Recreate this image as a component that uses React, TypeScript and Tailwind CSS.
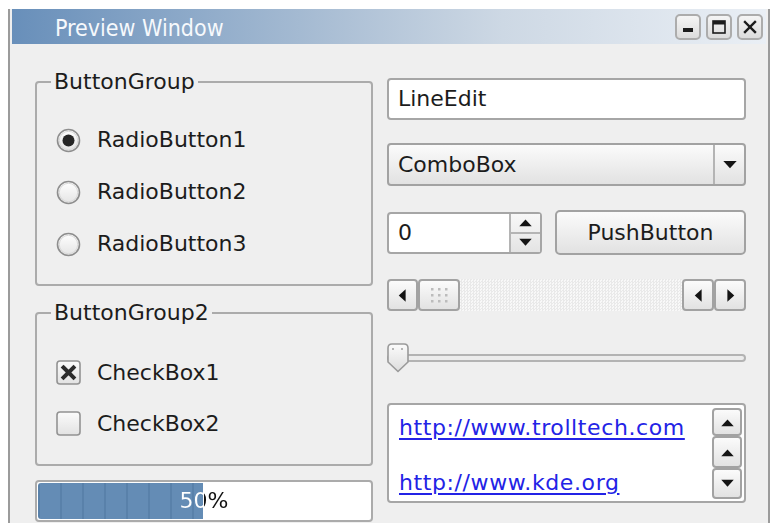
import React from "react";

function Radio({ checked }: { checked?: boolean }) {
  return (
    <svg width="25" height="25" viewBox="0 0 25 25" className="shrink-0">
      <defs>
        <linearGradient id="radioFill" x1="0" y1="0" x2="0" y2="1">
          <stop offset="0" stopColor="#ffffff" />
          <stop offset="1" stopColor="#e4e4e4" />
        </linearGradient>
      </defs>
      <circle cx="12.5" cy="12.5" r="11" fill="url(#radioFill)" stroke="#8e8e8e" strokeWidth="1.6" />
      <circle cx="12.5" cy="12.5" r="9.2" fill="none" stroke="#d9d9d9" strokeWidth="1" />
      {checked && <circle cx="12.5" cy="12.5" r="6" fill="#262626" />}
    </svg>
  );
}

function Check({ checked }: { checked?: boolean }) {
  return (
    <svg width="25" height="25" viewBox="0 0 25 25" className="shrink-0">
      <defs>
        <linearGradient id="checkFill" x1="0" y1="0" x2="0" y2="1">
          <stop offset="0" stopColor="#fbfbfb" />
          <stop offset="1" stopColor="#e2e2e2" />
        </linearGradient>
      </defs>
      <rect x="1" y="1" width="23" height="23" rx="3" fill="url(#checkFill)" stroke="#939393" strokeWidth="1.6" />
      {checked && (
        <g stroke="#2c2c2c" strokeWidth="4" strokeLinecap="square">
          <line x1="7.5" y1="7.5" x2="17.5" y2="17.5" />
          <line x1="17.5" y1="7.5" x2="7.5" y2="17.5" />
        </g>
      )}
    </svg>
  );
}

function Tri({ dir, size = 15 }: { dir: "up" | "down" | "left" | "right"; size?: number }) {
  const pts: Record<string, string> = {
    up: "1,9 11,9 6,3.5",
    down: "1,3 11,3 6,8.5",
    left: "8.5,1 8.5,11 3,6",
    right: "3.5,1 3.5,11 9,6",
  };
  return (
    <svg width={size} height={size} viewBox="0 0 12 12">
      <polygon points={pts[dir]} fill="#141414" />
    </svg>
  );
}

function Group({ title, children }: { title: string; children: React.ReactNode }) {
  return (
    <fieldset className="rounded-[4px] border-2 border-[#ababab] px-0">
      <legend className="ml-[14px] px-[3px] leading-[26px]">{title}</legend>
      {children}
    </fieldset>
  );
}

function Row({ h, children }: { h: string; children: React.ReactNode }) {
  return <div className={`flex items-center gap-[16px] pl-[19px] ${h}`}>{children}</div>;
}

const raised =
  "border-2 border-[#a2a2a2] bg-linear-to-b from-[#fbfbfb] to-[#e2e2e2]";

function WinButton({ children }: { children: React.ReactNode }) {
  return (
    <div className="flex h-[26px] w-[26px] items-center justify-center rounded-[5px] border-2 border-[#acacac] bg-linear-to-b from-[#f5f5f5] to-[#dcdcdc]">
      {children}
    </div>
  );
}

function TitleBar() {
  return (
    <div className="mx-[2px] flex h-[35px] items-center bg-[image:linear-gradient(90deg,#688fba_0%,#a7bcd3_40%,#cdd8e4_65%,#eaeff5_100%)] pl-[43px] pr-[3px]">
      <span className="flex-1 pt-[4px] font-['DejaVu_Sans_Condensed','DejaVu_Sans',sans-serif] text-[23px] leading-none text-[#f6f9fc] [font-stretch:condensed]">
        Preview Window
      </span>
      <div className="flex gap-[5px]">
        <WinButton>
          <svg width="14" height="14" viewBox="0 0 14 14">
            <rect x="2" y="8" width="10" height="4" fill="#1c1c1c" />
          </svg>
        </WinButton>
        <WinButton>
          <svg width="16" height="16" viewBox="0 0 16 16">
            <rect x="2" y="2" width="12" height="12" fill="none" stroke="#1c1c1c" strokeWidth="1.6" />
            <rect x="2" y="2" width="12" height="3.5" fill="#1c1c1c" />
          </svg>
        </WinButton>
        <WinButton>
          <svg width="16" height="16" viewBox="0 0 16 16">
            <g stroke="#1c1c1c" strokeWidth="2.4" strokeLinecap="square">
              <line x1="3" y1="3" x2="13" y2="13" />
              <line x1="13" y1="3" x2="3" y2="13" />
            </g>
          </svg>
        </WinButton>
      </div>
    </div>
  );
}

function Grip() {
  const dots = [];
  for (let r = 0; r < 3; r++)
    for (let c = 0; c < 3; c++)
      dots.push(<rect key={`${r}-${c}`} x={c * 7} y={r * 6} width="2.5" height="2.5" fill="#bcbcbc" />);
  return (
    <svg width="17" height="15" viewBox="0 0 17 15">
      {dots}
    </svg>
  );
}

function ProgressBar({ value }: { value: number }) {
  const fill = Math.round((334 * value) / 100);
  return (
    <div className="relative mt-[14px] h-[42px] rounded-[4px] border-2 border-[#ababab] bg-white">
      <div
        className="absolute bottom-[1px] left-[1px] top-[1px] rounded-l-[3px] bg-[#6189b2] bg-[image:repeating-linear-gradient(90deg,#5981aa_0px,#5981aa_2px,#648cb5_2px,#648cb5_22px)]"
        style={{ width: fill - 2 }}
      />
      {/* label is white over the filled part, dark over the rest */}
      <div
        className="absolute inset-0 flex items-center justify-center bg-clip-text text-transparent"
        style={{ backgroundImage: `linear-gradient(90deg, #ffffff 0px, #ffffff ${fill}px, #111111 ${fill}px, #111111 100%)` }}
      >
        {value}%
      </div>
    </div>
  );
}

const link = "text-[#2323e6] underline decoration-[1.5px] underline-offset-[3px] tracking-[0.6px]";

export default function App() {
  return (
    <div className="h-[523px] w-[774px] overflow-hidden bg-white font-['DejaVu_Sans','Liberation_Sans',sans-serif] text-[22px] leading-[26px] text-[#1c1c1c]">
      <div className="ml-[8px] mt-[9px] h-[514px] w-[762px] border-x-2 border-[#9b9b9b] bg-[#efefef]">
        <TitleBar />
        <div className="flex gap-[14px] pl-[25px]">
          {/* left column */}
          <div className="flex w-[338px] flex-col pt-[25px]">
            <Group title="ButtonGroup">
              <div className="pb-[14px] pt-[19px]">
                <Row h="h-[52px]">
                  <Radio checked />
                  <span>RadioButton1</span>
                </Row>
                <Row h="h-[52px]">
                  <Radio />
                  <span>RadioButton2</span>
                </Row>
                <Row h="h-[52px]">
                  <Radio />
                  <span>RadioButton3</span>
                </Row>
              </div>
            </Group>
            <div className="mt-[14px]">
              <Group title="ButtonGroup2">
                <div className="pb-[15px] pt-[21px]">
                  <Row h="h-[51px]">
                    <Check checked />
                    <span>CheckBox1</span>
                  </Row>
                  <Row h="h-[51px]">
                    <Check />
                    <span>CheckBox2</span>
                  </Row>
                </div>
              </Group>
            </div>
            <ProgressBar value={50} />
          </div>

          {/* right column */}
          <div className="flex w-[359px] flex-col pt-[34px]">
            <div className="flex h-[42px] items-center rounded-[4px] border-2 border-[#a6a6a6] bg-white pl-[9px]">
              LineEdit
            </div>

            <div className={`mt-[23px] flex h-[43px] rounded-[4px] ${raised}`}>
              <div className="flex flex-1 items-center pl-[9px]">ComboBox</div>
              <div className="flex w-[31px] items-center justify-center border-l-2 border-[#b4b4b4]">
                <Tri dir="down" size={16} />
              </div>
            </div>

            <div className="mt-[24px] flex h-[45px] items-center gap-[13px]">
              <div className="flex h-[42px] w-[155px] rounded-[4px] border-2 border-[#a6a6a6] bg-white">
                <div className="flex flex-1 items-center pl-[9px]">0</div>
                <div className="flex w-[31px] flex-col border-l-2 border-[#b4b4b4] bg-linear-to-b from-[#f8f8f8] to-[#e4e4e4]">
                  <div className="flex flex-1 items-center justify-center border-b-2 border-[#b4b4b4]">
                    <Tri dir="up" />
                  </div>
                  <div className="flex flex-1 items-center justify-center">
                    <Tri dir="down" />
                  </div>
                </div>
              </div>
              <div className={`flex h-[45px] flex-1 items-center justify-center rounded-[5px] ${raised}`}>
                PushButton
              </div>
            </div>

            <div className="mt-[24px] flex h-[32px]">
              <div className={`flex w-[31px] items-center justify-center rounded-[4px] ${raised}`}>
                <Tri dir="left" />
              </div>
              <div className={`flex w-[42px] items-center justify-center rounded-[4px] ${raised}`}>
                <Grip />
              </div>
              <div className="flex-1 bg-[image:repeating-conic-gradient(#e9e9e9_0%_25%,#f8f8f8_0%_50%)] bg-[length:3px_3px]" />
              <div className={`flex w-[32px] items-center justify-center rounded-[4px] ${raised}`}>
                <Tri dir="left" />
              </div>
              <div className={`flex w-[32px] items-center justify-center rounded-[4px] ${raised}`}>
                <Tri dir="right" />
              </div>
            </div>

            <div className="relative mt-[32px] flex h-[29px] items-center">
              <div className="h-[8px] w-full rounded-full border-2 border-[#b3b3b3] bg-[#ececec]" />
              <svg width="22" height="30" viewBox="0 0 22 30" className="absolute left-0 top-0">
                <defs>
                  <linearGradient id="knob" x1="0" y1="0" x2="0" y2="1">
                    <stop offset="0" stopColor="#fbfbfb" />
                    <stop offset="1" stopColor="#dddddd" />
                  </linearGradient>
                </defs>
                <path d="M1 5 Q1 1 5 1 H17 Q21 1 21 5 V19 L11 28.5 L1 19 Z" fill="url(#knob)" stroke="#9a9a9a" strokeWidth="1.6" />
                <rect x="5" y="5" width="2" height="2" fill="#b5b5b5" />
                <rect x="14" y="5" width="2" height="2" fill="#b5b5b5" />
              </svg>
            </div>

            <div className="mt-[31px] flex h-[100px] rounded-[4px] border-2 border-[#a6a6a6] bg-white">
              <div className="flex flex-1 flex-col gap-[29px] pl-[10px] pt-[10px]">
                <a className={link}>http://www.trolltech.com</a>
                <a className={link}>http://www.kde.org</a>
              </div>
              <div className="mr-[2px] flex w-[30px] flex-col pt-[3px]">
                <div className={`flex h-[28px] items-center justify-center rounded-[4px] ${raised}`}>
                  <Tri dir="up" />
                </div>
                <div className={`flex h-[32px] items-center justify-center rounded-[4px] ${raised}`}>
                  <Tri dir="up" />
                </div>
                <div className={`flex h-[31px] items-center justify-center rounded-[4px] ${raised}`}>
                  <Tri dir="down" />
                </div>
              </div>
            </div>
          </div>
        </div>
      </div>
    </div>
  );
}
